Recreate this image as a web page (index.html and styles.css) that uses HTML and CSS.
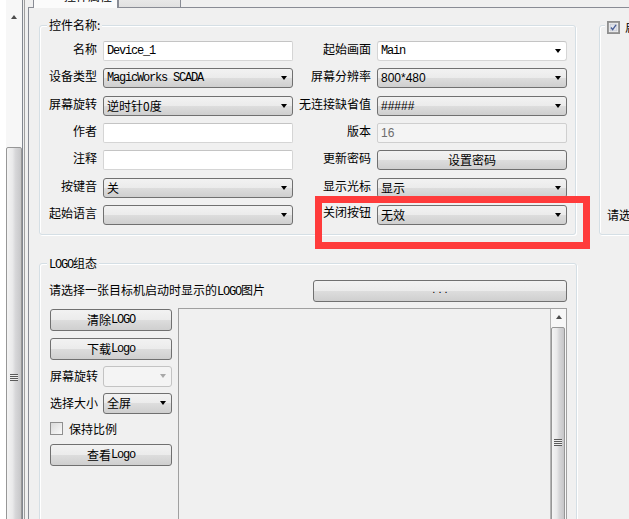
FILE: index.html
```html
<!DOCTYPE html>
<html lang="zh-CN">
<head>
    <meta charset="UTF-8">
    <title>控件属性</title>
    <link rel="stylesheet" href="styles.css">
</head>
<body>
    <div class="window">
        <aside class="tree">
            <div class="vscroll">
                <div class="sb-up"><i class="arr-up"></i></div>
                <div class="sb-thumb tree-thumb"><i class="grip"></i></div>
            </div>
        </aside>
        <div class="splitter"></div>

        <main class="tabctl">
            <div class="tabbar">
                <div class="tab active">
                    <svg width="10" height="10" viewBox="0 0 10 10"><path d="M8 1 L2 5 L8 9 Z" fill="#2f64b8"/></svg>
                    <span>控件属性</span>
                </div>
                <div class="tab"><span>控件事件</span></div>
            </div>

            <div class="page">
                <div class="top-row">
                    <section class="group props">
                        <span class="group-title">控件名称:</span>
                        <div class="form-grid">
                            <label>名称</label>
                            <div class="edit"><span class="mono">Device_1</span></div>
                            <label>起始画面</label>
                            <div class="edit combo"><span class="mono">Main</span></div>

                            <label>设备类型</label>
                            <div class="combo"><span class="mono">MagicWorks SCADA</span></div>
                            <label>屏幕分辨率</label>
                            <div class="combo"><span class="latin">800*480</span></div>

                            <label>屏幕旋转</label>
                            <div class="combo"><span>逆时针0度</span></div>
                            <label>无连接缺省值</label>
                            <div class="combo"><span class="latin">#####</span></div>

                            <label>作者</label>
                            <div class="edit"></div>
                            <label>版本</label>
                            <div class="edit disabled"><span class="latin">16</span></div>

                            <label>注释</label>
                            <div class="edit"></div>
                            <label>更新密码</label>
                            <div class="btn">设置密码</div>

                            <label>按键音</label>
                            <div class="combo"><span>关</span></div>
                            <label>显示光标</label>
                            <div class="combo"><span>显示</span></div>

                            <label>起始语言</label>
                            <div class="combo"><span></span></div>
                            <label class="raised">关闭按钮</label>
                            <div class="combo"><span>无效</span></div>
                        </div>
                    </section>

                    <section class="group side">
                        <span class="group-title check-title">
                            <svg class="check on" width="13" height="13" viewBox="0 0 13 13">
                                <rect x="0.5" y="0.5" width="12" height="12" fill="#f4f4f4" stroke="#8f8f8f"/>
                                <rect x="2.5" y="2.5" width="8" height="8" fill="#e2e4ea" stroke="#c4c8d2"/>
                                <path d="M3.5 6.5 L5.5 9 L9.5 3.5" fill="none" stroke="#4a5f97" stroke-width="1.6"/>
                            </svg>
                            启用屏保
                        </span>
                        <p class="side-hint">请选择屏保画面</p>
                    </section>
                </div>

                <section class="group logo">
                    <span class="group-title"><span class="mono">LOGO</span>组态</span>
                    <div class="logo-head">
                        <span>请选择一张目标机启动时显示的<span class="mono">LOGO</span>图片</span>
                        <div class="btn browse"><span class="dots">. . .</span></div>
                    </div>
                    <div class="logo-body">
                        <div class="logo-tools">
                            <div class="btn first">清除<span class="mono">LOGO</span></div>
                            <div class="btn">下载<span class="mono">Logo</span></div>
                            <div class="tool-row">
                                <label>屏幕旋转</label>
                                <div class="combo disabled"><span></span></div>
                            </div>
                            <div class="tool-row">
                                <label>选择大小</label>
                                <div class="combo"><span>全屏</span></div>
                            </div>
                            <div class="check-row">
                                <span class="check"></span>
                                <span>保持比例</span>
                            </div>
                            <div class="btn">查看<span class="mono">Logo</span></div>
                        </div>
                        <div class="viewer">
                            <div class="vscroll">
                                <div class="sb-up"><i class="arr-up"></i></div>
                                <div class="sb-thumb viewer-thumb"><i class="grip"></i></div>
                            </div>
                        </div>
                    </div>
                </section>
            </div>
        </main>
    </div>

    <div class="mark"></div>
</body>
</html>
```

FILE: styles.css
```css
body {
    margin: 0;
    background: #f0f0f0;
    font-family: "Noto Sans CJK SC", "Liberation Sans", sans-serif;
    font-size: 12px;
    line-height: 16px;
    color: #000;
    overflow: hidden;
}
.window {
    display: flex;
    height: 519px;
}

/* left tree pane */
.tree {
    width: 22px;
    flex-shrink: 0;
    background: #fff;
    border-right: 1px solid #828790;
    display: flex;
    justify-content: flex-end;
}
.tree .vscroll {
    width: 16px;
    padding-top: 8px;
    background: #f7f7f7;
}
.splitter {
    width: 5px;
    flex-shrink: 0;
    background: linear-gradient(to right, transparent 1px, #a0a0a0 1px, #a0a0a0 2px, transparent 2px);
}

/* scrollbars */
.sb-up {
    height: 17px;
    display: flex;
    align-items: center;
    justify-content: center;
}
.arr-up {
    border-style: solid;
    border-width: 0 3.5px 4px;
    border-color: transparent transparent #4d4d4d;
}
.sb-thumb {
    box-sizing: border-box;
    border: 1px solid #979797;
    border-radius: 2px;
    background: linear-gradient(to right, #f4f4f4, #e9e9ea 40%, #d7d7d9 60%, #c6c6c8);
    display: flex;
    align-items: center;
    justify-content: center;
}
.tree-thumb {
    margin-top: 122px;
    height: 460px;
}
.grip {
    width: 8px;
    height: 7px;
    background: repeating-linear-gradient(#5a5a5a 0 1px, #eeeeee 1px 2px);
}

/* tab control */
.tabctl {
    flex: 1;
    min-width: 0;
    display: flex;
    flex-direction: column;
}
.tabbar {
    height: 7px;
    display: flex;
    align-items: flex-end;
    padding-left: 5px;
    border-bottom: 1px solid #898c95;
}
.tab {
    flex-shrink: 0;
    box-sizing: border-box;
    width: 63px;
    height: 20px;
    padding: 0 0 0 6px;
    border: 1px solid #898c95;
    border-bottom: 0;
    background: linear-gradient(#f4f4f4, #e1e1e1);
    display: flex;
    align-items: flex-start;
}
.tab span {
    margin-top: -6px;
}
.tab.active {
    width: 85px;
    height: 22px;
    margin-bottom: -1px;
    padding-left: 1px;
    background: #fbfbfb;
}
.tab.active span {
    margin-top: 1px;
}
.tab.active svg {
    margin: 4px 18px 0 1px;
}
.page {
    flex: 1;
    border-left: 1px solid #898c95;
    padding: 17px 0 0 10px;
}

/* group boxes */
.top-row {
    display: flex;
    gap: 23px;
}
.group {
    position: relative;
    flex-shrink: 0;
    box-sizing: border-box;
    border: 1px solid #d5dfe5;
    border-radius: 3px;
    box-shadow: inset 1px 1px 0 #fff, 1px 1px 0 #fff;
}
.group-title {
    position: absolute;
    top: -9px;
    left: 7px;
    padding: 0 2px;
    background: #f0f0f0;
    white-space: nowrap;
}
.props {
    width: 537px;
    padding: 15px 8px 9px 0;
}
.form-grid {
    display: grid;
    grid-template-columns: 57px 190px 72px 190px;
    grid-auto-rows: 20px;
    column-gap: 6px;
    row-gap: 7.33px;
}
.form-grid label {
    text-align: right;
    white-space: nowrap;
}
.form-grid label.raised {
    margin-top: -1px;
}
.side {
    width: 200px;
    padding: 0 0 11px 7px;
    display: flex;
    align-items: flex-end;
}
.check-title {
    top: -7px;
    left: 5px;
    display: flex;
    align-items: center;
    gap: 5px;
}
.side-hint {
    margin: 0;
    white-space: nowrap;
}

/* controls */
.edit, .combo, .btn {
    box-sizing: border-box;
    display: flex;
    align-items: center;
    white-space: nowrap;
    overflow: hidden;
}
.edit {
    background: #fff;
    border: 1px solid #d5d5d5;
    border-top-color: #c4c4c4;
    border-radius: 2px;
    padding: 0 3px;
}
.edit.disabled {
    background: #f4f4f4;
    border-color: #cfcfcf;
    color: #6d6d6d;
}
.combo {
    border: 1px solid #707070;
    border-radius: 3px;
    padding: 0 5px 0 3px;
    background: linear-gradient(#f2f2f2, #ebebeb 50%, #dddddd 50%, #cfcfcf);
}
.combo.edit {
    background: #fff;
    border: 1px solid #d5d5d5;
    border-top-color: #c4c4c4;
}
.combo::after {
    content: "";
    margin-left: auto;
    flex-shrink: 0;
    border-style: solid;
    border-width: 4px 3.5px 0;
    border-color: #000 transparent transparent;
}
.combo.disabled {
    background: #f4f4f4;
    border-color: #c3c3c3;
}
.combo.disabled::after {
    border-top-color: #a8a8a8;
}
.btn {
    justify-content: center;
    border: 1px solid #707070;
    border-radius: 3px;
    background: linear-gradient(#f2f2f2, #ebebeb 50%, #dddddd 50%, #cfcfcf);
}
.mono {
    font-family: "Liberation Mono", monospace;
    font-size: 12px;
    letter-spacing: -1.2px;
}
.latin {
    font-family: "Liberation Sans", sans-serif;
}
.dots {
    font-family: "Liberation Sans", sans-serif;
    font-size: 11px;
    line-height: 8px;
    margin-top: -4px;
}

/* logo group */
.logo {
    width: 538px;
    height: 300px;
    margin-top: 28px;
    padding: 16px 9px 0 9px;
}
.logo-head {
    display: flex;
    align-items: center;
    justify-content: space-between;
    height: 22px;
    white-space: nowrap;
}
.browse {
    width: 254px;
    height: 22px;
}
.logo-body {
    display: flex;
    gap: 6px;
    margin-top: 6px;
}
.logo-tools {
    width: 122px;
    flex-shrink: 0;
    margin: 1px 0 0 1px;
    display: flex;
    flex-direction: column;
    gap: 6px;
}
.logo-tools .btn {
    height: 22px;
}
.logo-tools .btn.first {
    margin-bottom: 1px;
}
.tool-row {
    display: flex;
    align-items: center;
    height: 21px;
}
.tool-row label {
    width: 53px;
    white-space: nowrap;
}
.tool-row .combo {
    flex: 1;
    height: 21px;
}
.check-row {
    display: flex;
    align-items: center;
    gap: 6px;
    height: 18px;
}
.check {
    width: 13px;
    height: 13px;
    box-sizing: border-box;
    border: 1px solid #8f8f8f;
    background: linear-gradient(135deg, #dadada, #fafafa);
}
.viewer {
    flex: 1;
    height: 260px;
    border: 1px solid #a0a0a0;
    border-bottom: 0;
    display: flex;
    justify-content: flex-end;
}
.viewer .vscroll {
    width: 16px;
    box-sizing: border-box;
    border-left: 1px solid #b4b4b4;
    background: #f7f7f7;
}
.viewer-thumb {
    width: 14px;
    margin-top: 1px;
    height: 232px;
}

/* red highlight drawn over the screenshot */
.mark {
    position: absolute;
    left: 315px;
    top: 196px;
    width: 275px;
    height: 53px;
    box-sizing: border-box;
    border: 7px solid #ff3b3b;
}
```
